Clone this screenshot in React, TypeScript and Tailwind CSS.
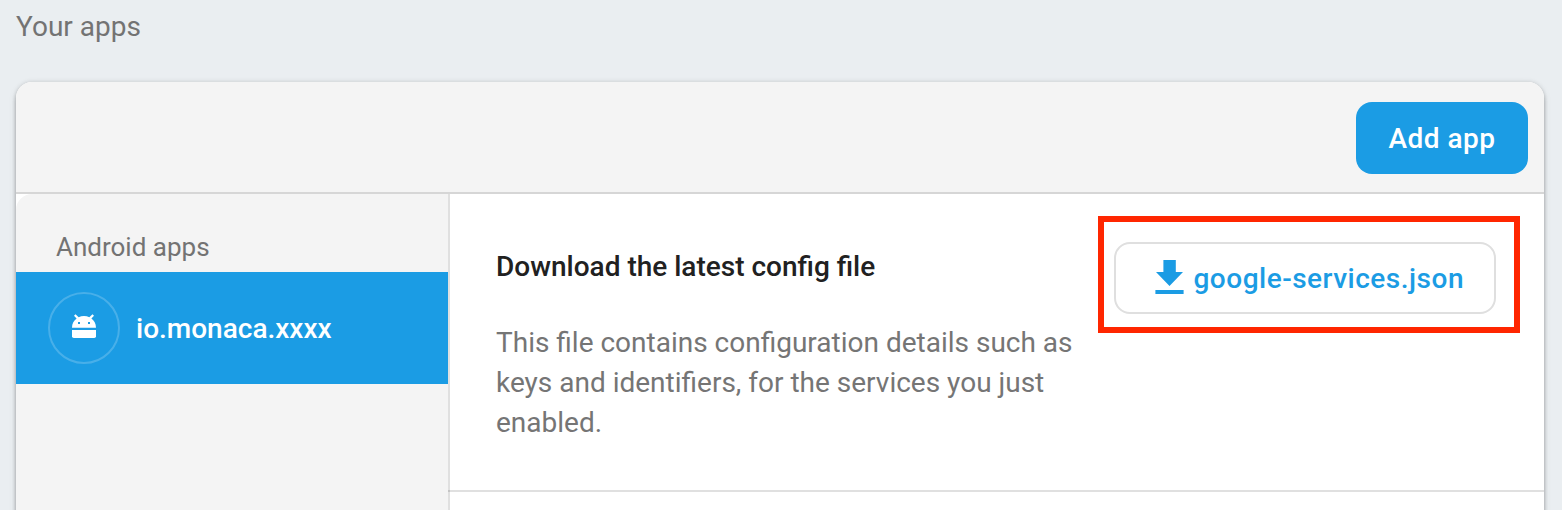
function AndroidIcon() {
  return (
    <svg width="24" height="24" viewBox="0 0 24 24" className="block -translate-y-[2px]">
      <path
        fill="#fff"
        fillRule="evenodd"
        d="M0 13.700C0 9.600 1.900 6.400 4.600 4.500L2 1.800 3.500.2 6.700 3.200C8.300 2.400 10 2 12 2s3.700.4 5.300 1.200L20.500.2 22 1.800 19.400 4.500c2.700 1.900 4.600 5.100 4.600 9.200zM6 8v2h2V8zm10 0v2h2V8z"
      />
      <path fill="#fff" d="M0 16h24v6.200a1.800 1.800 0 0 1-1.800 1.800H1.800A1.800 1.800 0 0 1 0 22.200z" />
    </svg>
  );
}

function DownloadIcon() {
  return (
    <svg width="29" height="34" viewBox="0 0 29 34" className="block shrink-0 -translate-y-px">
      <path fill="#1b9ce4" d="M8.400 0h12.400v12H28L14.500 26 1 12h7.400zM.400 30h28.200v4H.400z" />
    </svg>
  );
}

export default function App() {
  return (
    <div className="h-[510px] overflow-hidden bg-[#eaeef1] px-4 font-[Roboto,sans-serif] pr-[18px]">
      <h2 className="h-[82px] pt-[7px] text-[28px] leading-[40px] text-[#737373]">Your apps</h2>
      <div className="h-[520px] overflow-hidden rounded-2xl bg-white shadow-[0_4px_4px_rgba(0,0,0,0.24),0_0_4px_rgba(0,0,0,0.12),0_2px_8px_rgba(0,0,0,0.08)]">
        <div className="flex h-[112px] items-start justify-end border-b-2 border-[#d6d6d6] bg-[#f4f4f4] pt-5 pr-4">
          <button className="h-[72px] w-[172px] rounded-2xl bg-[#1b9ce4] pt-[2px] text-[28px] font-medium tracking-[0.5px] text-white">
            Add app
          </button>
        </div>
        <div className="flex h-full">
          <aside className="w-[432px] shrink-0 rounded-tl-2xl bg-[#f4f4f4]">
            <div className="h-[78px] pt-[33px] pl-10 text-[26px] leading-[40px] text-[#737373]">Android apps</div>
            <div className="flex h-[112px] items-center gap-4 bg-[#1b9ce4] pl-8 text-white">
              <div className="flex size-[72px] items-center justify-center rounded-full border-2 border-white/20">
                <AndroidIcon />
              </div>
              <span className="pt-[2px] text-[28px] font-medium">io.monaca.xxxx</span>
            </div>
          </aside>
          <main className="min-w-0 grow border-l-2 border-black/12">
            <section className="-ml-[2px] flex h-[298px] border-b-2 border-black/12">
              <div className="w-[666px] pt-[53px] pl-12">
                <h3 className="text-[28px] leading-[40px] font-medium text-[#212121]">Download the latest config file</h3>
                <p className="mt-9 w-[600px] text-[28px] leading-[40px] text-[#757575]">
                  This file contains configuration details such as
                  <br />
                  keys and identifiers, for the services you just
                  <br />
                  enabled.
                </p>
              </div>
              <div className="relative mt-12 h-[72px] w-[382px] shrink-0">
                <button className="flex h-full w-full items-center rounded-2xl border-2 border-[#dfdfdf] pl-[39px] text-[28px] font-medium tracking-[0.5px] text-[#1b9ce4]">
                  <DownloadIcon />
                  <span className="ml-[9.500px] pt-[2px]">google-services.json</span>
                </button>
                <div className="pointer-events-none absolute -top-[26px] -left-4 h-[117px] w-[422px] border-6 border-[#ff2600]" />
              </div>
            </section>
          </main>
        </div>
      </div>
    </div>
  );
}
